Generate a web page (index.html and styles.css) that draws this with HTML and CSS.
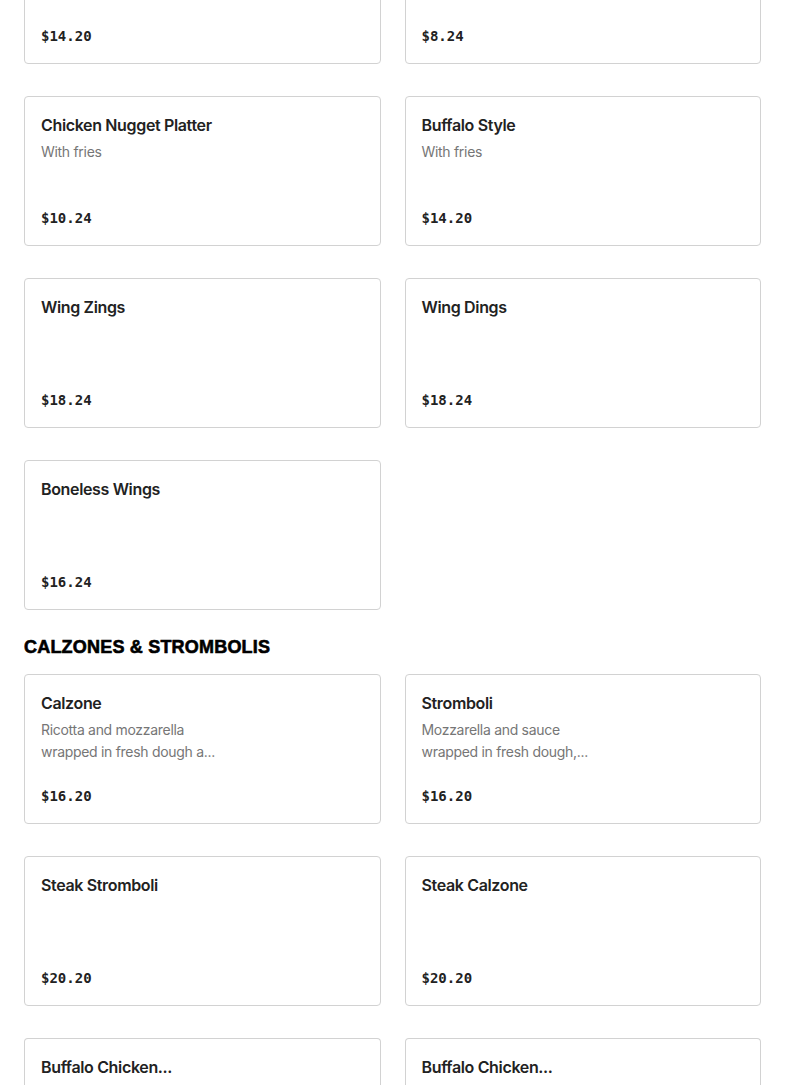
FILE: index.html
```html
<!DOCTYPE html>
<html>
<head>
<meta charset="utf-8">
<link rel="stylesheet" href="styles.css">
</head>
<body>
<main class="menu">
  <section class="section section--scrolled">
    <div class="grid">
      <div class="card card--partial"><div class="price">$14.20</div></div>
      <div class="card card--partial"><div class="price">$8.24</div></div>
      <div class="card"><div class="title">Chicken Nugget Platter</div><div class="desc">With fries</div><div class="price">$10.24</div></div>
      <div class="card"><div class="title">Buffalo Style</div><div class="desc">With fries</div><div class="price">$14.20</div></div>
      <div class="card"><div class="title">Wing Zings</div><div class="price">$18.24</div></div>
      <div class="card"><div class="title">Wing Dings</div><div class="price">$18.24</div></div>
      <div class="card"><div class="title">Boneless Wings</div><div class="price">$16.24</div></div>
    </div>
  </section>
  <section class="section">
    <h2 class="heading">CALZONES &amp; STROMBOLIS</h2>
    <div class="grid">
      <div class="card"><div class="title">Calzone</div><div class="desc">Ricotta and mozzarella<br>wrapped in fresh dough a...</div><div class="price">$16.20</div></div>
      <div class="card"><div class="title">Stromboli</div><div class="desc">Mozzarella and sauce<br>wrapped in fresh dough,...</div><div class="price">$16.20</div></div>
      <div class="card"><div class="title">Steak Stromboli</div><div class="price">$20.20</div></div>
      <div class="card"><div class="title">Steak Calzone</div><div class="price">$20.20</div></div>
      <div class="card card--cut"><div class="title">Buffalo Chicken...</div></div>
      <div class="card card--cut"><div class="title">Buffalo Chicken...</div></div>
    </div>
  </section>
</main>
</body>
</html>
```
FILE: styles.css
```css
html, body {
  margin: 0;
  padding: 0;
  background: #ffffff;
  overflow: hidden;
}
body {
  font-family: Inter, "Liberation Sans", sans-serif;
  color: #1f1f1f;
}
.menu {
  padding: 0 24px;
}
.section--scrolled {
  margin-top: -86px;
}
.grid {
  display: grid;
  grid-template-columns: 1fr 1fr;
  column-gap: 24px;
  row-gap: 32px;
}
.card {
  box-sizing: border-box;
  height: 150px;
  border: 1px solid #d2d2d2;
  border-radius: 4px;
  padding: 16px;
  display: flex;
  flex-direction: column;
  background: #fff;
}
.card--cut {
  height: 80px;
  border-bottom: none;
  border-radius: 4px 4px 0 0;
}
.title {
  font-size: 16px;
  line-height: 24px;
  font-weight: 600;
  color: #222;
  letter-spacing: -0.35px;
}
.desc {
  margin-top: 4px;
  font-size: 14px;
  line-height: 22px;
  color: #767676;
  letter-spacing: -0.3px;
}
.price {
  margin-top: auto;
  font-family: "DejaVu Sans Mono", "Liberation Mono", monospace;
  font-weight: bold;
  font-size: 14px;
  line-height: 20px;
  color: #222;
  position: relative;
  top: -1px;
}
.heading {
  margin: 26px 0 16px;
  font-family: "Liberation Sans", Arial, sans-serif;
  font-weight: 900;
  font-size: 18px;
  line-height: 22px;
  letter-spacing: 0.2px;
  -webkit-text-stroke: 0.6px #000;
  color: #000;
}
```
